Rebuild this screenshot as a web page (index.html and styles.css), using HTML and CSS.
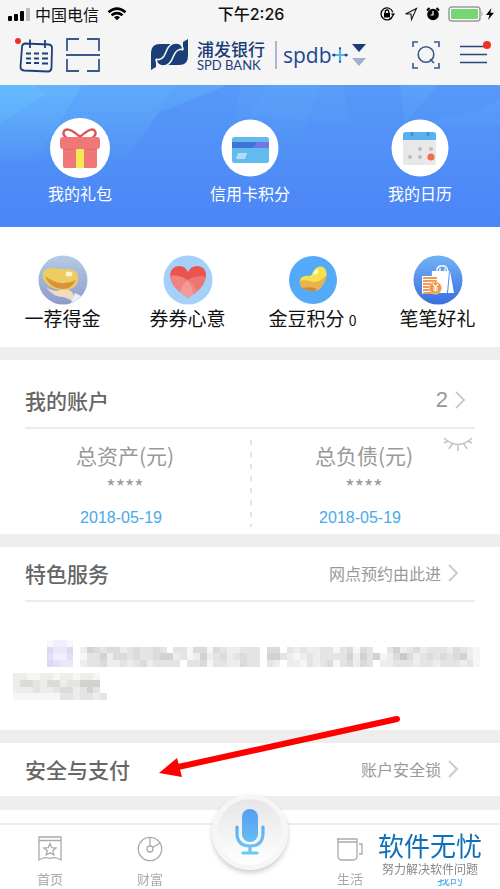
FILE: index.html
```html
<!DOCTYPE html>
<html lang="zh-CN">
<head>
  <meta charset="UTF-8">
  <meta name="viewport" content="width=device-width, initial-scale=1.0">
  <title>浦发银行</title>
  <link rel="stylesheet" href="styles.css">
</head>
<body>
  <!-- Status bar -->
  <div class="status">
    <div class="status-side">
      <svg width="22" height="14" viewBox="0 0 22 14">
        <rect x="0" y="9" width="4" height="5" rx="1"/>
        <rect x="6" y="7" width="4" height="7" rx="1"/>
        <rect x="12" y="4" width="4" height="10" rx="1"/>
        <rect x="18" y="1" width="4" height="13" rx="1" fill="#bbb"/>
      </svg>
      <span class="carrier">中国电信</span>
      <svg width="20" height="14" viewBox="0 0 20 14" fill="none" stroke="#000" stroke-width="2.6">
        <path d="M1.5 5.2Q10 -2 18.500 5.200"/>
        <path d="M4.500 8.300Q10 4 15.500 8.300"/>
        <path d="M7 10.200Q10 8 13 10.200L10 13.300Z" fill="#000" stroke="none"/>
      </svg>
    </div>
    <span class="time">下午2:26</span>
    <div class="status-side status-right">
      <svg width="16" height="14" viewBox="0 0 16 14" fill="none" stroke="#000" stroke-width="1.3">
        <path d="M12.800 8.500A6 6 0 1 1 12.800 5.300"/>
        <path d="M10.800 6.500H15.200L13 9.300Z" fill="#000" stroke="none"/>
        <rect x="4" y="6" width="6" height="4.500" fill="#000" stroke="none"/>
        <path d="M5.200 6.500V4.800a1.800 1.800 0 0 1 3.600 0V6.500"/>
      </svg>
      <svg width="14" height="14" viewBox="0 0 14 14" fill="none" stroke="#111" stroke-width="1.1">
        <path d="M1.500 7L12.500 1.500L7.500 12.500L7 7Z"/>
      </svg>
      <svg width="14" height="14" viewBox="0 0 14 14">
        <circle cx="7" cy="7.500" r="5.800"/>
        <path d="M1 3.500L3.500 1M13 3.500L10.500 1" stroke="#000" stroke-width="2"/>
        <path d="M7 4V8H4.500" fill="none" stroke="#fff" stroke-width="1.200"/>
      </svg>
      <svg class="battery" width="36" height="16" viewBox="0 0 36 16">
        <rect x="1" y="1" width="31" height="14" rx="3" fill="#fff" stroke="#999" stroke-width="1.500"/>
        <rect x="3" y="3" width="27" height="10" rx="1" fill="#76d672"/>
        <path d="M33.500 5.500q2 2.500 0 5z" fill="#999"/>
      </svg>
      <svg width="8" height="12" viewBox="0 0 8 12"><path d="M5.500 0L0 7H3.500L2 12L8 4.800H4.300Z"/></svg>
    </div>
  </div>

  <!-- Header -->
  <header class="header">
    <div class="header-tools">
      <button type="button" aria-label="日历">
        <svg width="36" height="36" viewBox="0 0 36 36" fill="none" stroke="#1d4079" stroke-width="1.800">
          <path d="M7 6.500L31 7.500Q34 8 34 11L33.500 31Q33 34.500 30 34.500L6 33.500Q2.500 33 2.500 30L4 10Q4 7 7 6.500Z"/>
          <path d="M12 2.500V11M27 3V11"/>
          <path d="M8 16.500H13M16 16.500H21M24 16.500H30M8 21.500H13M16 21.500H21M24 21.500H30M8 26H13M16 26H21M24 26.500H30" stroke-width="2.200"/>
          <circle cx="0" cy="4" r="3" fill="#ee3226" stroke="none"/>
        </svg>
      </button>
      <button type="button" aria-label="扫一扫">
        <svg width="34" height="34" viewBox="0 0 34 34" fill="none" stroke="#3a588c" stroke-width="1.800">
          <path d="M1 13V1H13M21 1H33V13M33 21V33H21M13 33H1V21M0 17H34"/>
        </svg>
      </button>
    </div>
    <div class="brand">
      <svg width="40" height="34" viewBox="0 0 40 34" fill="#1b3d78">
        <path d="M1 32V15Q1 6 10 6H21Q17 9 16 14Q14 21 9 21Q7 21 6 20V29Z"/>
        <path d="M38 1V18Q38 27 29 27H18Q22 24 23 19Q25 12 30 12Q32 12 33 13V4Z"/>
        <path d="M26 5Q32 5 33 11Q26 11 23.500 18Q20 28 13 28Q7 28 6 22Q13 22 15.500 15Q19 5 26 5Z" stroke="#f5f5f5" stroke-width="1.600"/>
      </svg>
      <div class="brand-name">
        <strong>浦发银行</strong>
        <span>SPD BANK</span>
      </div>
      <span class="brand-sub">spdb</span>
      <svg width="16" height="16" viewBox="0 0 16 16">
        <path d="M8 0V16M0 8H16" stroke="#5ab1e8" stroke-width="2.200"/>
        <circle cx="2" cy="8" r="1.500" fill="#234da0"/><circle cx="14" cy="8" r="1.500" fill="#234da0"/>
        <circle cx="8" cy="1.500" r="1" fill="#234da0"/><circle cx="8" cy="14.500" r="1" fill="#234da0"/>
      </svg>
      <svg class="brand-arrows" width="14" height="22" viewBox="0 0 14 22">
        <path d="M0 0H14L7 8Z" fill="#1b3d78"/><path d="M0 14H14L7 22Z" fill="#a2b1c9"/>
      </svg>
    </div>
    <div class="header-tools header-right">
      <button type="button" aria-label="搜索">
        <svg width="28" height="28" viewBox="0 0 28 28" fill="none" stroke="#3a588c" stroke-width="1.600">
          <path d="M1 6V1H6M22 1H27V6M27 22V27H22M6 27H1V22"/>
          <circle cx="14" cy="13.500" r="7.800"/><path d="M18 18L22 22"/>
        </svg>
      </button>
      <button type="button" aria-label="菜单">
        <svg width="32" height="28" viewBox="0 0 32 28" fill="none" stroke="#27477d" stroke-width="1.400">
          <path d="M0 5.500H27M0 13.500H27M0 21.500H27"/>
          <circle cx="27" cy="4" r="4" fill="#ee3226" stroke="none"/>
        </svg>
      </button>
    </div>
  </header>

  <!-- Blue banner -->
  <nav class="banner">
    <svg class="banner-bg" viewBox="0 0 500 142" preserveAspectRatio="none">
      <defs>
        <linearGradient id="sky" x1="0" y1="0" x2="0" y2="1">
          <stop offset="0" stop-color="#5699f8"/><stop offset="1" stop-color="#4b85f6"/>
        </linearGradient>
        <linearGradient id="ray" x1="0" y1="0" x2="0" y2="80" gradientUnits="userSpaceOnUse">
          <stop offset="0" stop-color="#6ac4ff" stop-opacity=".5"/><stop offset="1" stop-color="#6ac4ff" stop-opacity="0"/>
        </linearGradient>
      </defs>
      <rect width="500" height="142" fill="url(#sky)"/>
      <path d="M0 0H228L158 28L120 80H0Z" fill="url(#ray)" opacity=".6"/>
      <path d="M0 0H175L158 28L140 60L120 80H0Z" fill="url(#ray)" opacity=".3"/>
      <path d="M0 0H82L62 34L30 80H0Z" fill="url(#ray)" opacity=".7"/>
      <path d="M0 0H35L46 9L0 38Z" fill="url(#ray)" opacity=".8"/>
      <path d="M241 0H342L352 38L250 32L233 35Z" fill="url(#ray)" opacity=".25"/>
      <path d="M268 0H320L300 60H233Z" fill="url(#ray)" opacity=".2"/>
      <path d="M400 0H438L405 38Z" fill="url(#ray)" opacity=".4"/>
      <path d="M500 14L474 27L400 40H500Z" fill="url(#ray)" opacity=".3"/>
    </svg>
    <a href="#gift">
      <svg width="60" height="60" viewBox="0 0 60 60">
        <circle cx="30" cy="30" r="30" fill="#fff"/>
        <path d="M30 19Q18 8 14 13Q12 17 17 20M30 19Q42 8 45 13Q47 17 42 20" fill="none" stroke="#d95757" stroke-width="2.400"/>
        <rect x="13" y="29" width="34" height="21" rx="2" fill="#ef7777"/>
        <path d="M13 29H47V32H13Z" fill="#e76868"/>
        <rect x="10" y="19" width="40" height="12" rx="3" fill="#ef7777"/>
        <rect x="26" y="31" width="8" height="19" fill="#f4e853"/>
      </svg>
      我的礼包
    </a>
    <a href="#points">
      <svg width="60" height="60" viewBox="0 0 60 60">
        <circle cx="30" cy="30" r="28.500" fill="#fff"/>
        <rect x="12" y="19" width="37" height="26" rx="2.500" fill="#62bbef"/>
        <path d="M12 24H49V30H12Z" fill="#3f74d6"/><path d="M37 24H49V30H33Z" fill="#7275e5"/>
        <path d="M18 35H27L25 41H16Z" fill="#b3ddf7"/>
      </svg>
      信用卡积分
    </a>
    <a href="#calendar">
      <svg width="60" height="60" viewBox="0 0 60 60">
        <circle cx="30" cy="30" r="28.500" fill="#fff"/>
        <rect x="13" y="14" width="33" height="33" rx="2.500" fill="#e8e8e8"/>
        <path d="M13 22V16.500Q13 14 15.500 14H43.500Q46 14 46 16.500V22Z" fill="#5bb1f0"/>
        <path d="M22 14V18M38 14V18" stroke="#438dca" stroke-width="2.500"/>
        <g fill="#bbb"><circle cx="30" cy="31" r="2"/><circle cx="41" cy="31" r="2"/><circle cx="20" cy="39" r="2"/><circle cx="30" cy="39" r="2"/></g>
        <circle cx="41" cy="39" r="3.600" fill="#ef704f"/>
      </svg>
      我的日历
    </a>
  </nav>

  <!-- Shortcuts -->
  <nav class="shortcuts">
    <a href="#refer">
      <svg width="50" height="50" viewBox="0 0 50 50">
        <defs>
          <linearGradient id="slate" x1="0" y1="0" x2="0" y2="1"><stop offset="0" stop-color="#b4cbe5"/><stop offset="1" stop-color="#8c9cca"/></linearGradient>
        </defs>
        <circle cx="25" cy="25" r="24.500" fill="url(#slate)"/>
        <path d="M8 32Q14 36 19 36Q28 32 33 36Q38 41 34 46Q30 43 25 42Q15 42 8 32Z" fill="#f5dac0"/>
        <path d="M37 38L43 41Q39 46 33 48Z" fill="#e8effd"/>
        <path d="M5 23Q3 12 17 13Q24 15 31 14Q42 15 40 26Q37 36 24 35Q9 34 5 23Z" fill="#edcc61"/>
        <path d="M7 21Q22 33 38 25Q34 34 24 34Q11 33 7 21Z" fill="#d99336"/>
        <ellipse cx="31" cy="19" rx="3.500" ry="2.500" fill="#fff6c9"/>
      </svg>
      <span>一荐得金</span>
    </a>
    <a href="#coupons">
      <svg width="50" height="50" viewBox="0 0 50 50">
        <defs><clipPath id="heart"><path d="M25 43Q7 32 7 20Q8 11 17 11Q22 11 25 17Q28 11 34 11Q43 11 43 21Q42 33 25 43Z"/></clipPath></defs>
        <circle cx="25" cy="25" r="24.500" fill="#a4d0fa"/>
        <g clip-path="url(#heart)">
          <rect width="50" height="50" fill="#e9544f"/>
          <circle cx="10" cy="40" r="20" fill="#fff" opacity=".18"/>
          <circle cx="37" cy="41" r="20" fill="#fff" opacity=".2"/>
          <circle cx="13" cy="43" r="22" fill="#fff" opacity=".12"/>
        </g>
      </svg>
      <span>券券心意</span>
    </a>
    <a href="#beans">
      <svg width="50" height="50" viewBox="0 0 50 50">
        <defs>
          <clipPath id="bean"><path d="M12 25Q14 20 22 21Q24 20 25 17Q29 10 35 12Q41 16 37 26Q32 37 23 36Q10 34 12 25Z"/></clipPath>
        </defs>
        <circle cx="25" cy="25" r="24" fill="#54a9f8"/>
        <g clip-path="url(#bean)">
          <rect width="50" height="50" fill="#f5e34e"/>
          <path d="M10 27Q14 24 22 26Q30 30 40 19V40H10Z" fill="#e9b34c"/>
          <path d="M14 33Q24 31 29 34L25 39H16Z" fill="#cf8631"/>
        </g>
        <ellipse cx="28" cy="17" rx="3" ry="1.800" fill="#fffbd0" transform="rotate(-40 28 17)"/>
      </svg>
      <span>金豆积分 <small>0</small></span>
    </a>
    <a href="#gifts">
      <svg width="50" height="50" viewBox="0 0 50 50">
        <defs>
          <linearGradient id="royal" x1="0" y1="0" x2="0" y2="1"><stop offset="0" stop-color="#70b3f6"/><stop offset="1" stop-color="#3a6ee0"/></linearGradient>
        </defs>
        <circle cx="25" cy="25" r="24.500" fill="url(#royal)"/>
        <path d="M24 17V14Q25 11 28 11H31Q34 11 35 17M27 17V13M32 17V13" fill="none" stroke="#fff" stroke-width="1.300"/>
        <path d="M19 16H36L34 38H18Z" fill="#fff"/>
        <path d="M37 16L41 38H35Z" fill="#fff"/>
        <rect x="9" y="21" width="16" height="18" fill="#fff"/>
        <path d="M10 23H24M10 26H24M10 29H24M10 32H24M10 35H24M10 38H20" stroke="#ef9d55" stroke-width="2.200"/>
        <circle cx="22.500" cy="33" r="6" fill="#ef9440" stroke="#f8c796"/>
        <path d="M20 29L22.500 32L25 29M22.500 32V37M20 33H25M20 35H25" fill="none" stroke="#fff" stroke-width="1.200"/>
      </svg>
      <span>笔笔好礼</span>
    </a>
  </nav>

  <!-- Account -->
  <section class="card account">
    <div class="card-head">
      <h2>我的账户</h2>
      <a href="#accounts" class="more"><span class="count">2</span>
        <svg width="12" height="18" viewBox="0 0 12 18"><path d="M2 1L10 9L2 17"/></svg>
      </a>
    </div>
    <div class="totals">
      <div class="total">
        <span>总资产(元)</span>
        <span class="stars">****</span>
        <span class="date">2018-05-19</span>
      </div>
      <div class="total">
        <span>总负债(元)</span>
        <span class="stars">****</span>
        <span class="date">2018-05-19</span>
      </div>
      <button type="button" class="eye" aria-label="显示金额">
        <svg width="30" height="16" viewBox="0 0 30 16" fill="none" stroke="#c4c4c4" stroke-width="1.500">
          <path d="M1 2Q15 15 29 2M5 5L1 7M25 5L29 7M9 8L6 13M15 9V15M21 8L24 13"/>
        </svg>
      </button>
    </div>
  </section>

  <!-- Featured services -->
  <section class="card">
    <div class="card-head">
      <h2>特色服务</h2>
      <a href="#booking" class="more">网点预约由此进
        <svg width="12" height="18" viewBox="0 0 12 18"><path d="M2 1L10 9L2 17"/></svg>
      </a>
    </div>
    <div class="notice">
      <svg id="mosaic" viewBox="0 0 72 9" shape-rendering="crispEdges"></svg>
    </div>
  </section>

  <!-- Security -->
  <section class="card security">
    <div class="card-head">
      <h2>安全与支付</h2>
      <a href="#lock" class="more">账户安全锁
        <svg width="12" height="18" viewBox="0 0 12 18"><path d="M2 1L10 9L2 17"/></svg>
      </a>
    </div>
    <svg class="pointer" width="244" height="66" viewBox="0 0 244 66">
      <path d="M19 55L238 7" stroke="#fe0000" stroke-width="6" stroke-linecap="round"/>
      <path d="M0 61L18 46L23 65Z" fill="#fe0000"/>
    </svg>
  </section>

  <!-- Bottom tabs -->
  <nav class="tabs">
    <a href="#home">
      <svg width="26" height="26" viewBox="0 0 26 26">
        <path d="M2 1H24V24Q18 20 13 22.500Q8 20 2 24ZM2 4.500H24"/>
        <path d="M13 7.500L14.800 11.700L19 12L15.800 14.800L16.800 19L13 16.700L9.200 19L10.200 14.800L7 12L11.200 11.700Z"/>
      </svg>
      首页
    </a>
    <a href="#wealth">
      <svg width="26" height="26" viewBox="0 0 26 26">
        <circle cx="13" cy="13" r="11.700"/><circle cx="13" cy="13" r="3"/><path d="M13 1V10M15.500 11.500L23 7"/>
      </svg>
      财富
    </a>
    <button type="button" class="mic" aria-label="语音">
      <svg width="34" height="48" viewBox="0 0 34 48">
        <defs>
          <linearGradient id="voice" x1="0" y1="0" x2="0" y2="48" gradientUnits="userSpaceOnUse"><stop offset="0" stop-color="#559cf0"/><stop offset="1" stop-color="#6ccbf8"/></linearGradient>
        </defs>
        <rect x="9" y="1" width="16" height="33" rx="8" fill="url(#voice)"/>
        <path d="M4 19V25Q4 38 17 38Q30 38 30 25V19M17 38V45M10 45H24" fill="none" stroke="url(#voice)" stroke-width="3.200" stroke-linecap="round"/>
      </svg>
    </button>
    <a href="#life">
      <svg width="26" height="26" viewBox="0 0 26 26">
        <path d="M0 3H20V20Q20 24 16 24H5Q1 24 1 20V3M1 6H20M22 8H25V18H22"/>
      </svg>
      生活
    </a>
    <a href="#mine" class="active">
      <svg width="26" height="26" viewBox="0 0 26 26"><circle cx="13" cy="9" r="6"/><path d="M2 25Q4 16 13 16Q22 16 24 25"/></svg>
      我的
    </a>
    <div class="badge">
      <strong>软件无忧</strong>
      <span>努力解决软件问题</span>
    </div>
  </nav>

  <script>
    // one digit per block, higher is darker; the small "tint" patch is purple
    const rows = [
      "",
      "000000000000254344234334303314414322333044032322331341430035234233324321",
      "000000000000133524434334552312523423433055321232333352535124642343434521",
      "000000000000233422323423333033413322433032022132341342430223332332333231",
      "",
      "002211221221221000000000",
      "002443244233555000000000",
      "002223223442353000000000",
      "001111111332332300000000"
    ];
    const tint = ["1221", "5335", "4224", "5433"];
    const svg = document.getElementById("mosaic");

    function block(x, y, color) {
      const rect = document.createElementNS("http://www.w3.org/2000/svg", "rect");
      rect.setAttribute("x", x);
      rect.setAttribute("y", y);
      rect.setAttribute("width", 1);
      rect.setAttribute("height", 1);
      rect.setAttribute("fill", color);
      svg.appendChild(rect);
    }

    rows.forEach((row, y) => {
      [...row].forEach((d, x) => {
        const v = 255 - d * 9;
        if (d > 0) block(x, y, `rgb(${v}, ${v}, ${v - 1})`);
      });
    });
    tint.forEach((row, y) => {
      [...row].forEach((d, x) => block(x + 7, y, `rgb(${255 - d * 7}, ${255 - d * 8}, ${255 - d * 2})`));
    });
  </script>
</body>
</html>
```
FILE: styles.css
```css
* {
  box-sizing: border-box;
}

body {
  margin: 0;
  min-height: 100vh;
  padding-bottom: 66px;
  background: #fff;
  font-family: "Noto Sans CJK SC", sans-serif;
  font-size: 16px;
  color: #111;
}

a {
  color: inherit;
  text-decoration: none;
}

button {
  display: block;
  padding: 0;
  border: 0;
  background: none;
  cursor: pointer;
}

svg {
  display: block;
  flex: none;
  overflow: visible;
}

/* Status bar */
.status {
  display: grid;
  grid-template-columns: 1fr auto 1fr;
  align-items: center;
  height: 28px;
  padding: 0 6px 0 8px;
  background: #f5f5f5;
}

.status-side {
  display: flex;
  align-items: center;
  gap: 8px;
}

.status-right {
  justify-content: flex-end;
}

.carrier,
.time {
  line-height: 28px;
}

.carrier {
  margin-left: -3px;
}

.time {
  font-family: Inter, "Noto Sans CJK SC", sans-serif;
  font-weight: 500;
}

.battery {
  margin-right: -6px;
}

/* Header */
.header {
  display: flex;
  align-items: center;
  height: 57px;
  padding: 0 8px 4px 18px;
  background: #f5f5f5;
}

.header-tools {
  display: flex;
  align-items: center;
  gap: 12px;
}

.header-right {
  gap: 20px;
  margin-left: auto;
}

.brand {
  display: flex;
  align-items: center;
  margin-left: 50px;
}

.brand-name {
  display: flex;
  flex-direction: column;
  margin: 2px 10px 0 7px;
  color: #1b3d78;
}

.brand-name strong {
  font-size: 17px;
  font-weight: 500;
  line-height: 18px;
}

.brand-name span {
  font-family: Lato, sans-serif;
  font-size: 13px;
  line-height: 14px;
}

.brand-sub {
  padding-left: 6px;
  border-left: 2px solid #a9b7cf;
  font-family: "Open Sans", sans-serif;
  font-size: 21px;
  line-height: 28px;
  color: #234593;
}

.brand-arrows {
  margin-left: 4px;
}

/* Blue banner */
.banner {
  position: relative;
  display: flex;
  justify-content: space-between;
  height: 142px;
  padding: 33px 48px 0;
  color: #fff;
}

.banner-bg {
  position: absolute;
  top: 0;
  left: 0;
  width: 100%;
  height: 100%;
}

.banner a {
  position: relative;
  display: flex;
  flex-direction: column;
  align-items: center;
  gap: 3px;
  line-height: 24px;
}

/* Shortcuts */
.shortcuts {
  display: grid;
  grid-template-columns: repeat(4, 1fr);
  height: 120px;
  padding-top: 28px;
}

.shortcuts a {
  display: flex;
  flex-direction: column;
  align-items: center;
  font-size: 19px;
  line-height: 26px;
}

.shortcuts small {
  font-size: 14px;
}

/* Cards */
.card {
  border-top: 13px solid #eee;
}

.card-head {
  display: flex;
  align-items: center;
  justify-content: space-between;
  height: 55px;
  margin: 0 25px;
  padding-bottom: 2px;
  border-bottom: 2px solid #ececec;
}

.card-head h2 {
  margin: 0;
  font-size: 21px;
  font-weight: 500;
  color: #666;
}

.more {
  display: flex;
  align-items: center;
  gap: 6px;
  margin-right: 16px;
  color: #999;
}

.more svg {
  fill: none;
  stroke: #ccc;
  stroke-width: 2;
}

.count {
  font-family: "Liberation Sans", sans-serif;
  font-size: 22px;
}

.account .card-head {
  height: 69px;
  padding-top: 14px;
}

.account .more {
  margin-right: 9px;
}

.totals {
  position: relative;
  display: grid;
  grid-template-columns: 1fr 1fr;
  height: 105px;
  padding-top: 11px;
}

.total {
  display: flex;
  flex-direction: column;
  align-items: center;
  gap: 2px;
  height: 87px;
  font-size: 21px;
  line-height: 30px;
  color: #999;
}

.total + .total {
  padding-right: 22px;
  background: repeating-linear-gradient(#e4e4e4 0 5px, transparent 5px 12px) left / 2px 100% no-repeat;
}

.stars {
  font-size: 20px;
}

.date {
  padding-right: 8px;
  font-family: "Liberation Sans", sans-serif;
  font-size: 16px;
  line-height: 28px;
  color: #4aa9e9;
}

.eye {
  position: absolute;
  top: 7px;
  right: 27px;
}

.notice {
  height: 128px;
  padding-top: 38px;
}

.notice svg {
  width: 96%;
}

.security {
  position: relative;
  border-bottom: 14px solid #eee;
}

.security .card-head {
  height: 53px;
  border-bottom: 0;
}

/* Red arrow lies over the card title row */
.pointer {
  position: absolute;
  top: -31px;
  left: 159px;
}

/* Bottom tabs */
.tabs {
  position: fixed;
  right: 0;
  bottom: 0;
  left: 0;
  display: grid;
  grid-template-columns: repeat(5, 1fr);
  height: 66px;
  border-top: 2px solid #eee;
  background: #fff;
}

.tabs a {
  display: flex;
  flex-direction: column;
  align-items: center;
  gap: 8px;
  padding-top: 11px;
  font-size: 13px;
  line-height: 18px;
  color: #aaa;
}

.tabs a svg {
  fill: none;
  stroke: #aaa;
  stroke-width: 1.3;
}

.tabs .active {
  color: #4aa9e9;
}

.mic {
  display: flex;
  align-items: center;
  justify-content: center;
  justify-self: center;
  width: 76px;
  height: 76px;
  margin-top: -31px;
  border: 5px solid #f6f6f6;
  border-radius: 50%;
  background: linear-gradient(#e6e6e6, #fff) padding-box;
  box-shadow: 0 3px 5px rgba(0, 0, 0, 0.2);
}

.badge {
  position: absolute;
  top: 0;
  right: 10px;
  display: flex;
  flex-direction: column;
  align-items: center;
  width: 120px;
  height: 54px;
  padding-top: 4px;
  background: #fff;
  white-space: nowrap;
}

.badge strong {
  font-size: 26px;
  font-weight: 400;
  line-height: 32px;
  color: #0e70bb;
}

.badge span {
  font-size: 12px;
  line-height: 16px;
  color: #888;
}
```
